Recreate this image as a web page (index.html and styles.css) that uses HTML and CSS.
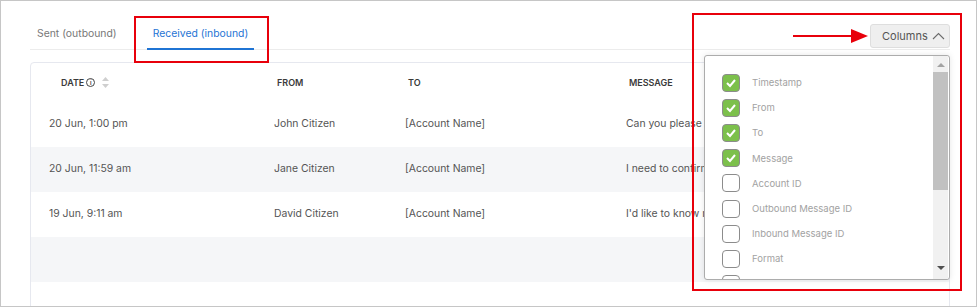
FILE: index.html
```html
<html>
<head>
<link rel="stylesheet" href="styles.css">
</head>
<body>
<div class="frame">
  <div class="toolbar">
    <div class="tabs">
      <a class="tab">Sent (outbound)</a>
      <a class="tab active">Received (inbound)</a>
    </div>
    <div class="columns">
      <button class="columns-btn">Columns
        <svg width="13" height="8" viewBox="0 0 13 8"><polyline points="1,7 6.5,1.5 12,7" fill="none" stroke="#6b6b6b" stroke-width="1.1"/></svg>
      </button>
      <div class="columns-menu">
        <ul class="columns-list">
          <li><span class="check on"><svg width="12" height="10" viewBox="0 0 12 10"><polyline points="2,5 5,8 10,2" fill="none" stroke="#fff" stroke-width="2"/></svg></span>Timestamp</li>
          <li><span class="check on"><svg width="12" height="10" viewBox="0 0 12 10"><polyline points="2,5 5,8 10,2" fill="none" stroke="#fff" stroke-width="2"/></svg></span>From</li>
          <li><span class="check on"><svg width="12" height="10" viewBox="0 0 12 10"><polyline points="2,5 5,8 10,2" fill="none" stroke="#fff" stroke-width="2"/></svg></span>To</li>
          <li><span class="check on"><svg width="12" height="10" viewBox="0 0 12 10"><polyline points="2,5 5,8 10,2" fill="none" stroke="#fff" stroke-width="2"/></svg></span>Message</li>
          <li><span class="check"></span>Account ID</li>
          <li><span class="check"></span>Outbound Message ID</li>
          <li><span class="check"></span>Inbound Message ID</li>
          <li><span class="check"></span>Format</li>
          <li><span class="check"></span></li>
        </ul>
        <div class="scrollbar">
          <div class="sb-up"></div>
          <div class="sb-thumb"></div>
          <div class="sb-down"></div>
        </div>
      </div>
    </div>
  </div>

  <div class="card">
    <div class="row head">
      <div class="cell date">DATE
        <span class="info">i</span>
        <svg class="sort" width="7" height="11" viewBox="0 0 7 11"><polygon points="3.5,0 7,4 0,4" fill="#cfcfcf"/><polygon points="0,7 7,7 3.5,11" fill="#cfcfcf"/></svg>
      </div>
      <div class="cell">FROM</div>
      <div class="cell">TO</div>
      <div class="cell">MESSAGE</div>
    </div>
    <div class="row">
      <div class="cell">20 Jun, 1:00 pm</div>
      <div class="cell">John Citizen</div>
      <div class="cell">[Account Name]</div>
      <div class="cell">Can you please check my order status?</div>
    </div>
    <div class="row alt">
      <div class="cell">20 Jun, 11:59 am</div>
      <div class="cell">Jane Citizen</div>
      <div class="cell">[Account Name]</div>
      <div class="cell">I need to confirm my appointment</div>
    </div>
    <div class="row">
      <div class="cell">19 Jun, 9:11 am</div>
      <div class="cell">David Citizen</div>
      <div class="cell">[Account Name]</div>
      <div class="cell">I'd like to know more about your plans</div>
    </div>
    <div class="row alt"></div>
    <div class="row"></div>
  </div>

  <div class="mark mark-tab"></div>
  <div class="mark mark-menu"></div>
  <svg class="mark-arrow" width="80" height="16" viewBox="0 0 80 16"><line x1="0" y1="8" x2="60" y2="8" stroke="#e8000b" stroke-width="2"/><polygon points="58,1 75,8 58,15" fill="#e8000b"/></svg>
</div>
</body>
</html>
```

FILE: styles.css
```css
body {
  margin: 0;
  font-family: Inter, "Noto Sans", sans-serif;
  }
.frame {
  position: relative;
  box-sizing: border-box;
  width: 977px;
  height: 307px;
  border: 1px solid #c6c6c6;
  padding: 0 26px 0 29px;
  overflow: hidden;
  background: #fff;
  }
.toolbar {
  display: flex;
  justify-content: space-between;
  align-items: flex-end;
  height: 48px;
  border-bottom: 1px solid #ececec;
  }
.tabs {
  display: flex;
  gap: 24px;
  padding-left: 1px;
  }
.tab {
  font-size: 10.4px;
  line-height: 16px;
  color: #777;
  padding: 0 6px 6px 6px;
  border-bottom: 2px solid transparent;
  margin-bottom: -1px;
  }
.tab.active {
  color: #1f74d4;
  border-bottom-color: #1f74d4;
  }
.columns {
  position: relative;
  margin-bottom: 1px;
  }
.columns-btn {
  display: flex;
  align-items: center;
  gap: 4px;
  box-sizing: border-box;
  width: 80px;
  height: 24px;
  padding: 0 0 0 11px;
  border: 1px solid #dedede;
  border-radius: 3px;
  background: #efefef;
  font-family: inherit;
  font-size: 11px;
  color: #555;
  }
.columns-menu {
  position: absolute;
  top: 31px;
  right: 0;
  z-index: 2;
  box-sizing: border-box;
  width: 246px;
  height: 225px;
  display: flex;
  border: 1px solid #acacac;
  border-radius: 3px;
  background: #fff;
  box-shadow: 0 0 6px rgba(0, 0, 0, 0.1);
  overflow: hidden;
  }
.columns-list {
  flex: 1;
  list-style: none;
  margin: 0;
  padding: 14px 0 0 17px;
  }
.columns-list li {
  display: flex;
  align-items: center;
  gap: 12px;
  height: 25.2px;
  font-size: 9.5px;
  color: #a2a2a2;
  }
.check {
  box-sizing: border-box;
  width: 18px;
  height: 18px;
  border: 1px solid #8c8c8c;
  border-radius: 4px;
  background: #fff;
  display: flex;
  align-items: center;
  justify-content: center;
  flex-shrink: 0;
  }
.check.on {
  background: #7cc04b;
  }
.scrollbar {
  width: 15px;
  margin-right: 1px;
  background: #f1f1f1;
  display: flex;
  flex-direction: column;
  align-items: center;
  }
.sb-up {
  width: 0;
  height: 0;
  margin-top: 7px;
  border-left: 4px solid transparent;
  border-right: 4px solid transparent;
  border-bottom: 4px solid #a3a3a3;
  }
.sb-thumb {
  width: 15px;
  height: 118px;
  margin-top: 5px;
  background: #c1c1c1;
  }
.sb-down {
  width: 0;
  height: 0;
  margin-top: auto;
  margin-bottom: 9px;
  border-left: 4px solid transparent;
  border-right: 4px solid transparent;
  border-top: 4px solid #505050;
  }
.card {
  margin-top: 12px;
  border: 1px solid #e6e8ef;
  border-radius: 4px;
  }
.row {
  display: grid;
  grid-template-columns: 225px 131px 221px 1fr;
  align-items: center;
  height: 45px;
  padding-left: 18px;
  font-size: 10.4px;
  color: #545454;
  }
.row.alt {
  background: #f5f6f8;
  }
.row .cell {
  white-space: nowrap;
  overflow: hidden;
  padding-bottom: 2px;
  }
.row.head {
  height: 39px;
  font-size: 9px;
  font-weight: 600;
  color: #3a3a3a;
  }
.head .cell {
  padding-left: 3px;
  padding-bottom: 0;
  display: flex;
  align-items: center;
  }
.head .cell.date {
  padding-left: 12px;
  }
.info {
  box-sizing: border-box;
  width: 9px;
  height: 9px;
  margin-left: 2px;
  border: 1px solid #444;
  border-radius: 50%;
  font-size: 6px;
  line-height: 7px;
  text-align: center;
  font-weight: 600;
  }
.sort {
  margin-left: 7px;
  }
.mark {
  position: absolute;
  z-index: 3;
  border: 2px solid #e8000b;
  }
.mark-tab {
  left: 133px;
  top: 15px;
  width: 131px;
  height: 43px;
  }
.mark-menu {
  left: 691px;
  top: 12px;
  width: 266px;
  height: 274px;
  }
.mark-arrow {
  position: absolute;
  z-index: 3;
  left: 792px;
  top: 27px;
  }
```
